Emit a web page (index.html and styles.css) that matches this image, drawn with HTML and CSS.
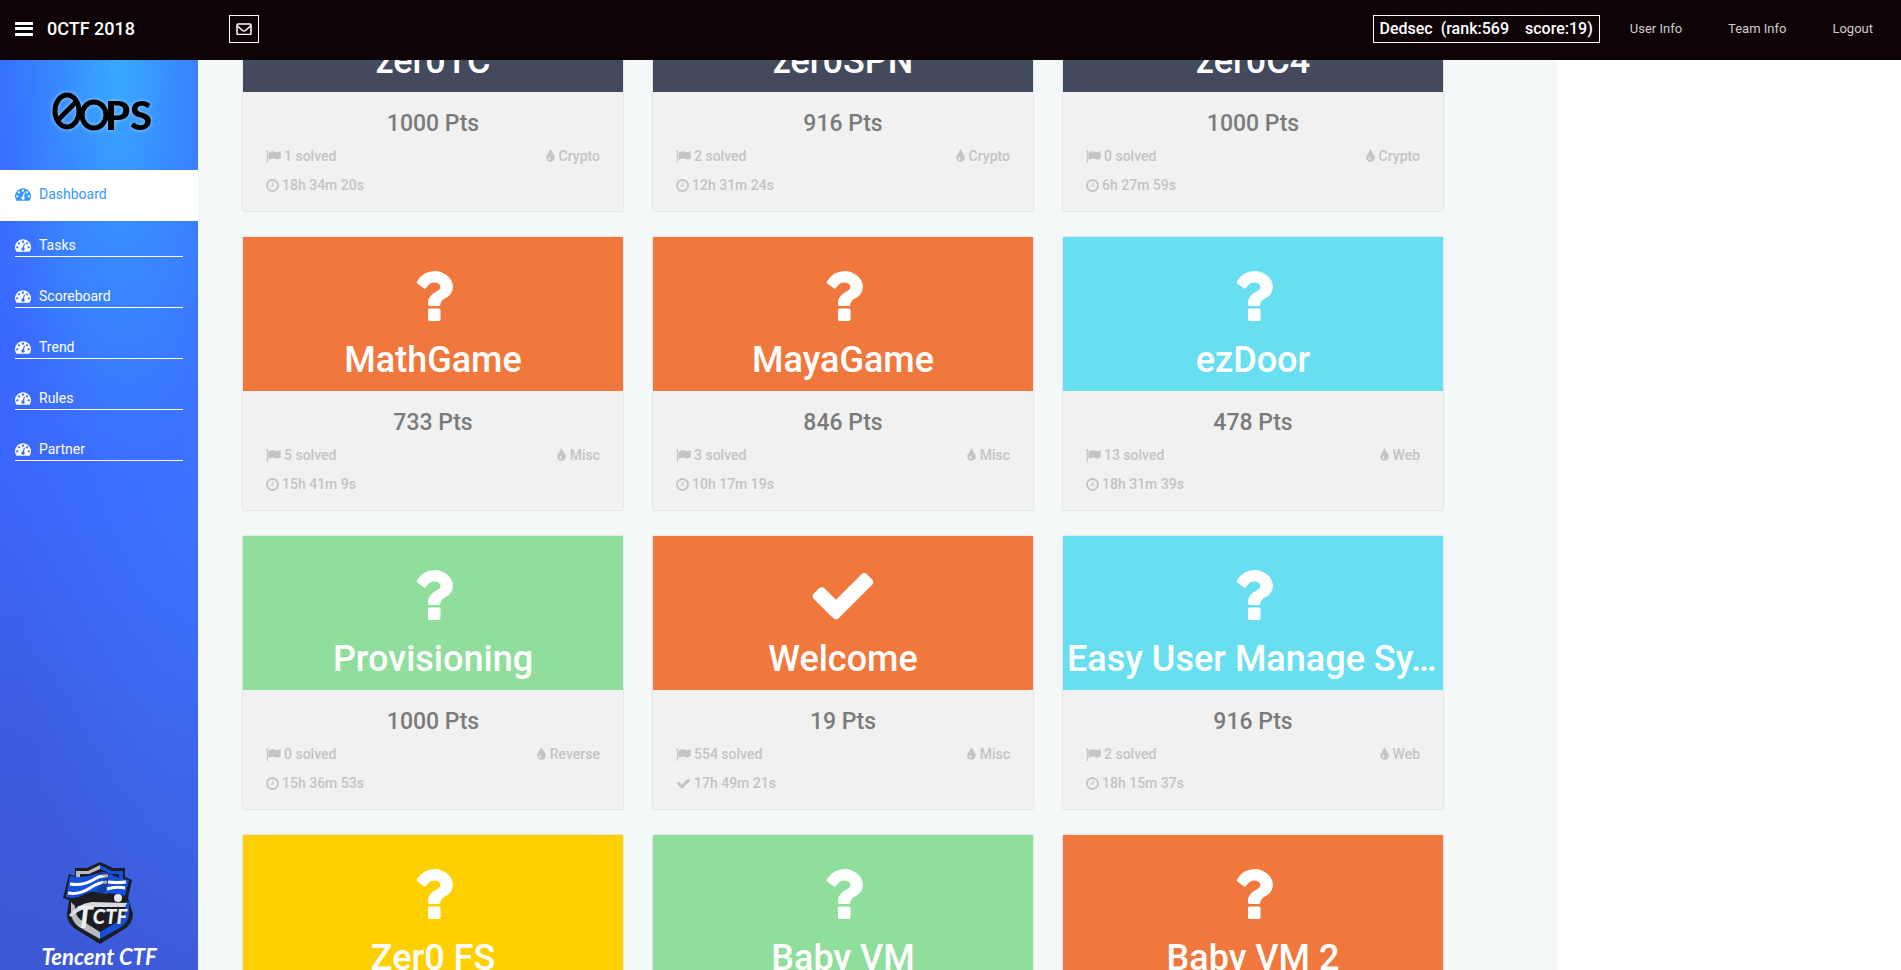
FILE: index.html
```
<!DOCTYPE html>
<html lang="en">
<head>
<meta charset="utf-8">
<title>0CTF 2018</title>
<link rel="stylesheet" href="styles.css">
</head>
<body>
<svg class="sprite" aria-hidden="true">
  <symbol id="question" viewBox="0 0 1792 1792"><path d="M1088 1256v240q0 16-12 28t-28 12h-240q-16 0-28-12t-12-28v-240q0-16 12-28t28-12h240q16 0 28 12t12 28zm316-600q0 54-15.500 101t-35 76.500-55 59.500-57.500 43.500-61 35.500q-41 23-68.500 65t-27.500 67q0 17-12 32.500t-28 15.500h-240q-15 0-25.500-18.500t-10.500-37.500v-45q0-83 65-156.500t143-108.500q59-27 84-56t25-76q0-42-46.500-74t-107.500-32q-65 0-108 29-35 25-107 115-13 16-31 16-12 0-25-8l-164-125q-13-10-15.500-25t5.500-28q160-266 464-266 80 0 161 31t146 83 106 127.500 41 158.500z"/></symbol>
  <symbol id="check" viewBox="0 0 1792 1792"><path d="M1671 566q0 40-28 68l-724 724-136 136q-28 28-68 28t-68-28l-136-136-362-362q-28-28-28-68t28-68l136-136q28-28 68-28t68 28l294 295 656-657q28-28 68-28t68 28l136 136q28 28 28 68z"/></symbol>
  <symbol id="gauge" viewBox="0 0 1792 1792"><path d="M384 1152q0-53-37.500-90.500t-90.500-37.500-90.500 37.500-37.500 90.500 37.500 90.500 90.500 37.500 90.500-37.500 37.500-90.500zm192-448q0-53-37.500-90.500t-90.500-37.500-90.500 37.500-37.500 90.500 37.500 90.500 90.500 37.500 90.500-37.500 37.500-90.500zm428 481l101-382q6-26-7.500-48.500t-38.500-29.500-48 6.500-30 39.500l-101 382q-60 5-107 43.500t-63 98.500q-20 77 20 146t117 89 146-20 89-117q16-60-6-117t-72-91zm660-33q0-53-37.500-90.500t-90.500-37.500-90.500 37.500-37.500 90.500 37.500 90.500 90.500 37.500 90.500-37.500 37.500-90.500zm-640-640q0-53-37.500-90.500t-90.500-37.500-90.500 37.500-37.500 90.500 37.500 90.500 90.500 37.500 90.500-37.500 37.500-90.500zm448 192q0-53-37.500-90.500t-90.500-37.500-90.500 37.500-37.500 90.500 37.500 90.500 90.500 37.500 90.500-37.500 37.500-90.500zm320 448q0 261-141 483-19 29-54 29h-1402q-35 0-54-29-141-221-141-483 0-182 71-348t191-286 286-191 348-71 348 71 286 191 191 286 71 348z"/></symbol>
  <symbol id="flag" viewBox="32 0 1792 1792"><path d="M320 256q0 72-64 110v1266q0 13-9.500 22.500t-22.500 9.500h-64q-13 0-22.500-9.500t-9.500-22.500v-1266q-64-38-64-110 0-53 37.500-90.500t90.500-37.500 90.500 37.500 37.500 90.500zm1472 64v763q0 25-12.500 38.500t-39.500 27.500q-215 116-369 116-61 0-123.500-22t-108.500-48-115.500-48-142.500-22q-192 0-464 146-17 9-33 9-26 0-45-19t-19-45v-742q0-32 31-55 21-14 79-43 236-120 421-120 107 0 200 29t219 88q38 19 88 19 54 0 117.500-21t110-47 88-47 54.500-21q26 0 45 19t19 45z"/></symbol>
  <symbol id="clock" viewBox="128 0 1536 1792"><path d="M1024 544v448q0 14-9 23t-23 9h-320q-14 0-23-9t-9-23v-64q0-14 9-23t23-9h224v-352q0-14 9-23t23-9h64q14 0 23 9t9 23zm416 352q0-148-73-273t-198-198-273-73-273 73-198 198-73 273 73 273 198 198 273 73 273-73 198-198 73-273zm224 0q0 209-103 385.500t-279.500 279.500-385.500 103-385.500-103-279.500-279.500-103-385.500 103-385.500 279.500-279.500 385.500-103 385.500 103 279.500 279.500 103 385.500z"/></symbol>
  <symbol id="drop" viewBox="256 0 1280 1792"><path d="M896 1152q0-36-20-69-1-1-15.500-22.500t-25.500-38-25-44-21-50.500q-4-16-21-16t-21 16q-7 23-21 50.500t-25 44-25.500 38-15.500 22.500q-20 33-20 69 0 53 37.500 90.500t90.500 37.500 90.500-37.500 37.500-90.500zm512-128q0 212-150 362t-362 150-362-150-150-362q0-145 81-275 6-9 62.500-90.500t101-151 99.500-178 83-201.500q9-30 34-47t51-17 51.500 17 33.500 47q28 93 83 201.500t99.500 178 101 151 62.500 90.500q81 127 81 275z"/></symbol>
</svg>

<header class="topbar">
  <button class="menu" aria-label="Toggle menu"><svg viewBox="0 0 18 14"><path d="M0 0h18v3H0zM0 5h18v3H0zM0 11h18v3H0z"/></svg></button>
  <a class="brand" href="#">0CTF 2018</a>
  <button class="mail" aria-label="Messages"><svg viewBox="0 0 16 12"><rect x="1" y="1" width="14" height="10.500" rx="1"/><path d="M1 2.500L6.500 7.500Q8 8.700 9.500 7.500L15 2.500"/></svg></button>
  <div class="team"><span>Dedsec</span><span class="rank">(rank:569</span><span>score:19)</span></div>
  <nav class="account"><a href="#">User Info</a><a href="#">Team Info</a><a href="#">Logout</a></nav>
</header>

<div class="layout">
  <aside class="sidebar">
    <div class="logo">
      <svg viewBox="0 0 108 54" role="img" aria-label="0ops">
        <g class="ops">
          <ellipse cx="22" cy="27" rx="12" ry="16"/>
          <path d="M13 36L32 17"/>
          <ellipse cx="49" cy="31" rx="12" ry="13"/>
          <text x="60" y="46">PS</text>
        </g>
      </svg>
    </div>
    <nav class="nav">
      <a class="active" href="#"><span><svg><use href="#gauge"/></svg>Dashboard</span></a>
      <a href="#"><span><svg><use href="#gauge"/></svg>Tasks</span></a>
      <a href="#"><span><svg><use href="#gauge"/></svg>Scoreboard</span></a>
      <a href="#"><span><svg><use href="#gauge"/></svg>Trend</span></a>
      <a href="#"><span><svg><use href="#gauge"/></svg>Rules</span></a>
      <a href="#"><span><svg><use href="#gauge"/></svg>Partner</span></a>
    </nav>
    <div class="sponsor">
      <svg viewBox="0 0 72 82" aria-hidden="true">
        <path fill="#1c1d22" d="M37 0L50 6H62V15L69 18L65 36L70 52Q70 62 60 68L37 82L14 68Q4 62 4 52L6 38L0 36L6 12L12 14V6H24Z"/>
        <path fill="#b9bbc0" d="M37 3V7L26 12H17V16H13V9H25ZM8 40V50Q8 59 16 65L37 77V70L18 58Q12 54 12 44Z"/>
        <path fill="#1450dc" d="M37 3L49 9H60V18H56V12H48L37 7ZM37 77V70L56 59Q62 55 62 47V40H66V51Q66 60 58 65Z"/>
        <path fill="#1450dc" d="M7 14Q20 17 32 12Q42 8 47 12Q56 17 66 18L62 34Q51 30 41 32Q28 27 20 33Q12 38 3 35Z"/>
        <path fill="none" stroke="#fff" stroke-width="3" d="M7 22Q20 24 30 18Q38 13 45 14M5 31Q16 33 27 26Q36 20 44 20M45 20Q54 21 63 20M44 27Q53 24 62 26"/>
        <path fill="#1c1d22" d="M28 10L47 11L43 28L40 33L34 28L43 15Z" opacity=".35"/>
        <path fill="#d9dbe0" d="M6 53Q14 42 29 40L64 41L62 45L30 45Q18 46 8 55Z"/>
        <circle cx="55" cy="36" r="4" fill="#e6e8ec"/>
        <text class="crest" x="13" y="66">T<tspan class="small" y="62">CTF</tspan></text>
      </svg>
      <p>Tencent CTF</p>
    </div>
  </aside>

  <main class="board">
    <div class="grid">
      <article class="card navy"><div class="head"><svg><use href="#question"/></svg><h2>zer0TC</h2></div><div class="body"><p class="pts">1000 Pts</p><p><span><svg class="w15"><use href="#flag"/></svg>1 solved</span><span><svg class="w11"><use href="#drop"/></svg>Crypto</span></p><p><span><svg class="w13"><use href="#clock"/></svg>18h 34m 20s</span></p></div></article>
      <article class="card navy"><div class="head"><svg><use href="#question"/></svg><h2>zer0SPN</h2></div><div class="body"><p class="pts">916 Pts</p><p><span><svg class="w15"><use href="#flag"/></svg>2 solved</span><span><svg class="w11"><use href="#drop"/></svg>Crypto</span></p><p><span><svg class="w13"><use href="#clock"/></svg>12h 31m 24s</span></p></div></article>
      <article class="card navy"><div class="head"><svg><use href="#question"/></svg><h2>zer0C4</h2></div><div class="body"><p class="pts">1000 Pts</p><p><span><svg class="w15"><use href="#flag"/></svg>0 solved</span><span><svg class="w11"><use href="#drop"/></svg>Crypto</span></p><p><span><svg class="w13"><use href="#clock"/></svg>6h 27m 59s</span></p></div></article>

      <article class="card orange"><div class="head"><svg><use href="#question"/></svg><h2>MathGame</h2></div><div class="body"><p class="pts">733 Pts</p><p><span><svg class="w15"><use href="#flag"/></svg>5 solved</span><span><svg class="w11"><use href="#drop"/></svg>Misc</span></p><p><span><svg class="w13"><use href="#clock"/></svg>15h 41m 9s</span></p></div></article>
      <article class="card orange"><div class="head"><svg><use href="#question"/></svg><h2>MayaGame</h2></div><div class="body"><p class="pts">846 Pts</p><p><span><svg class="w15"><use href="#flag"/></svg>3 solved</span><span><svg class="w11"><use href="#drop"/></svg>Misc</span></p><p><span><svg class="w13"><use href="#clock"/></svg>10h 17m 19s</span></p></div></article>
      <article class="card cyan"><div class="head"><svg><use href="#question"/></svg><h2>ezDoor</h2></div><div class="body"><p class="pts">478 Pts</p><p><span><svg class="w15"><use href="#flag"/></svg>13 solved</span><span><svg class="w11"><use href="#drop"/></svg>Web</span></p><p><span><svg class="w13"><use href="#clock"/></svg>18h 31m 39s</span></p></div></article>

      <article class="card green"><div class="head"><svg><use href="#question"/></svg><h2>Provisioning</h2></div><div class="body"><p class="pts">1000 Pts</p><p><span><svg class="w15"><use href="#flag"/></svg>0 solved</span><span><svg class="w11"><use href="#drop"/></svg>Reverse</span></p><p><span><svg class="w13"><use href="#clock"/></svg>15h 36m 53s</span></p></div></article>
      <article class="card orange"><div class="head"><svg><use href="#check"/></svg><h2>Welcome</h2></div><div class="body"><p class="pts">19 Pts</p><p><span><svg class="w15"><use href="#flag"/></svg>554 solved</span><span><svg class="w11"><use href="#drop"/></svg>Misc</span></p><p><span><svg class="w15"><use href="#check"/></svg>17h 49m 21s</span></p></div></article>
      <article class="card cyan"><div class="head"><svg><use href="#question"/></svg><h2>Easy User Manage Sy...</h2></div><div class="body"><p class="pts">916 Pts</p><p><span><svg class="w15"><use href="#flag"/></svg>2 solved</span><span><svg class="w11"><use href="#drop"/></svg>Web</span></p><p><span><svg class="w13"><use href="#clock"/></svg>18h 15m 37s</span></p></div></article>

      <article class="card yellow"><div class="head"><svg><use href="#question"/></svg><h2>Zer0 FS</h2></div></article>
      <article class="card green"><div class="head"><svg><use href="#question"/></svg><h2>Baby VM</h2></div></article>
      <article class="card orange"><div class="head"><svg><use href="#question"/></svg><h2>Baby VM 2</h2></div></article>
    </div>
  </main>
</div>
</body>
</html>
```
FILE: styles.css
```
* { box-sizing: border-box; }
body {
  margin: 0;
  height: 100vh;
  display: flex;
  flex-direction: column;
  overflow: hidden;
  background: #fff;
  font: 14px/20px Roboto, "Liberation Sans", sans-serif;
}
a { color: inherit; text-decoration: none; }
p, h2 { margin: 0; }
button { padding: 0; border: 0; background: none; }
svg { display: block; fill: currentColor; }
.sprite { display: none; }

.topbar {
  flex: none;
  height: 60px;
  padding: 0 28px 2px 15px;
  display: flex;
  align-items: center;
  background: #0e0408;
  color: #fff;
}
.menu { color: #fff; }
.menu svg { width: 18px; height: 14px; }
.brand { width: 182px; margin-left: 14px; font-size: 18px; font-weight: 500; }
.mail {
  width: 30px;
  height: 28px;
  display: grid;
  place-items: center;
  border: 1px solid #fff;
  color: #fff;
}
.mail svg { width: 16px; height: 12px; fill: none; stroke: currentColor; stroke-width: 1.500; }
.team {
  margin-left: auto;
  height: 28px;
  padding: 0 6px;
  display: flex;
  align-items: center;
  border: 1px solid #fff;
  font-size: 16px;
  font-weight: 500;
}
.rank { margin: 0 16px 0 8px; }
.account { display: flex; gap: 46px; margin-left: 30px; color: #ccc; font-size: 13px; }

.layout { flex: 1; min-height: 0; display: flex; }
.sidebar {
  flex: none;
  width: 198px;
  display: flex;
  flex-direction: column;
  color: #fff;
  background:
    radial-gradient(ellipse 130px 420px at 60% 0, #38aaff 0%, rgba(56, 150, 255, .7) 45%, rgba(56, 130, 255, 0) 100%),
    radial-gradient(ellipse 190px 600px at 100% 42%, rgba(61, 120, 255, .7), rgba(61, 110, 255, 0)),
    linear-gradient(15deg, #3d58d4 0%, #3c5ce0 25%, #3b67ff 55%, #376dff 100%);
}
.logo { height: 110px; padding: 24px 0 0 45px; }
.logo svg { width: 108px; height: 54px; }
.ops { filter: drop-shadow(0 0 2px #9cf); color: #000; }
.ops ellipse, .ops path { fill: none; stroke: #000; stroke-width: 5; }
.ops text { font: 900 40px Lato, sans-serif; }
.nav a { display: block; height: 51px; padding: 0 15px; }
.nav span {
  height: 36px;
  padding-top: 12px;
  display: flex;
  align-items: center;
  gap: 8px;
  border-bottom: 1px solid #fff;
}
.nav svg { width: 16px; height: 16px; }
.nav .active { background: #fff; color: #3898ff; }
.nav .active span { border-color: transparent; }
.sponsor { margin-top: auto; display: flex; flex-direction: column; align-items: center; }
.sponsor svg { width: 72px; height: 82px; }
.sponsor p { font: italic 700 22px/26px Lato, sans-serif; }
.crest { font: italic 900 30px Lato, sans-serif; fill: #eceef2; }
.small { font-size: 20px; }

.board {
  flex: 0 1 1359px;
  overflow: hidden;
  padding: 0 114px 0 45px;
  background: #f4f8f9;
}
.grid {
  display: grid;
  grid-template-columns: repeat(3, minmax(0, 1fr));
  gap: 26px 30px;
  margin-top: -122px;
}
.card { background: #f1f1f1; box-shadow: 0 0 2px rgba(0, 0, 0, .2); color: #c4c4c4; }
.head {
  height: 154px;
  padding: 24px 4px 0;
  color: #fff;
  text-align: center;
}
.head svg { width: 70px; height: 70px; margin: 0 auto 7px; }
.head h2 {
  overflow: hidden;
  white-space: nowrap;
  text-overflow: ellipsis;
  font-size: 36px;
  line-height: 44px;
  font-weight: 500;
}
.navy .head { background: #434a5d; }
.orange .head { background: #f0783d; }
.cyan .head { background: #67dff1; }
.green .head { background: #8fde9b; }
.yellow .head { background: #ffd000; }
.body { padding: 18px 23px 11px; }
.body p { display: flex; justify-content: space-between; line-height: 29px; font-weight: 500; }
.body .pts { justify-content: center; margin-bottom: 4px; color: #7b7b7b; font-size: 23px; line-height: 28px; }
.body span { display: flex; align-items: center; gap: 3px; }
.body svg { height: 15px; }
.w15 { width: 15px; }
.w13 { width: 13px; }
.w11 { width: 11px; }
```
